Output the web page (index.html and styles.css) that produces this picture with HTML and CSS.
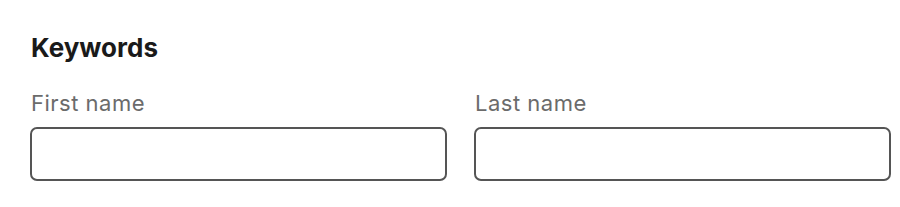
FILE: index.html
```html
<html>
  <head>
    <title>Keywords</title>
    <link rel="stylesheet" href="styles.css">
  </head>
  <body>
    <div class="form-section">
      <div class="section-title">Keywords</div>
      <div class="field-row">
        <div class="field">
          <label for="first-name">First name</label>
          <input id="first-name" type="text">
        </div>
        <div class="field">
          <label for="last-name">Last name</label>
          <input id="last-name" type="text">
        </div>
      </div>
    </div>
  </body>
</html>
```

FILE: styles.css
```css
* {
  box-sizing: border-box;
}
html {
  background-color: #ffffff;
}
body {
  margin: 0;
  font-family: Inter, "Noto Sans", sans-serif;
  color: #1a1a1a;
}
.form-section {
  padding: 32px 9px 0 30px;
}
.section-title {
  font-size: 26px;
  font-weight: 700;
  line-height: 32px;
  margin-bottom: 25px;
  padding-left: 1px;
}
.field-row {
  display: grid;
  grid-template-columns: 1fr 1fr;
  gap: 27px;
}
.field {
  display: flex;
  flex-direction: column;
}
.field label {
  font-size: 22px;
  color: #6b6b6b;
  line-height: 28px;
  letter-spacing: 0.5px;
  margin-bottom: 10px;
  padding-left: 1px;
}
.field input {
  height: 54px;
  border: 2px solid #555555;
  border-radius: 7px;
  font-family: inherit;
  font-size: 18px;
  padding: 0 14px;
  background: #ffffff;
}
```
